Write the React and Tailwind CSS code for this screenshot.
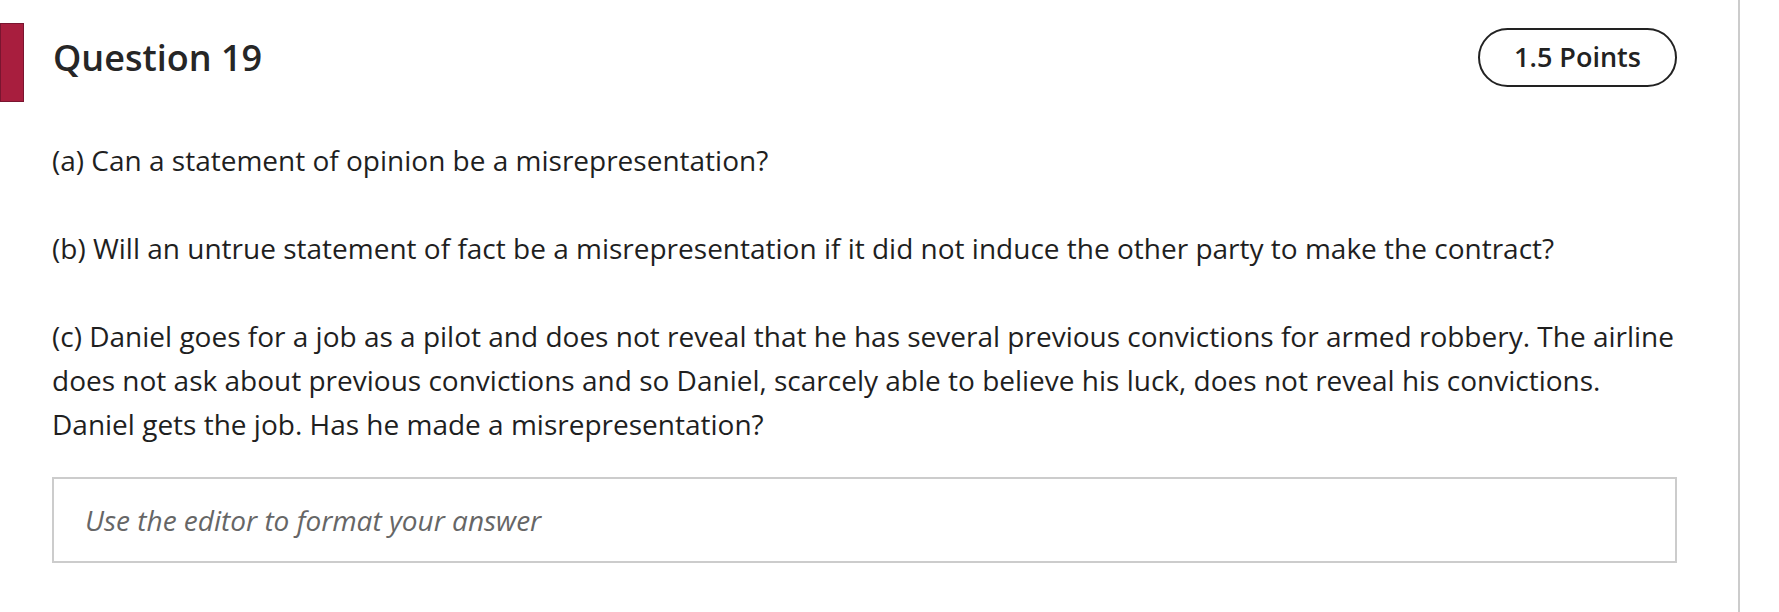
export default function App() {
  return (
    <div className="flex h-[612px] w-[1779px] bg-white text-[#1f1f1f]" style={{ fontFamily: '"Open Sans", "Noto Sans", sans-serif' }}>
      <div className="w-[1740px] border-r-2 border-[#cccccc]">
        <div className="flex items-start">
          <div className="mt-[23px] h-[79px] w-[24px] border border-[#7a1530] bg-[#a81e3e]" />
          <div className="ml-[29px] mr-[61px] mt-[28px] flex flex-1 items-center justify-between">
            <h2 className="text-[36px] font-semibold leading-none text-[#262626]">Question 19</h2>
            <div className="flex h-[59px] w-[199px] items-center justify-center rounded-full border-2 border-[#222222] text-[27px] font-semibold text-[#222222]">
              1.5 Points
            </div>
          </div>
        </div>
        <div className="pl-[52px] pr-[61px] pt-[36px] text-[28px] leading-[44px]">
          <p>(a) Can a statement of opinion be a misrepresentation?</p>
          <p className="mt-[44px]">(b) Will an untrue statement of fact be a misrepresentation if it did not induce the other party to make the contract?</p>
          <p className="mt-[44px]">
            (c) Daniel goes for a job as a pilot and does not reveal that he has several previous convictions for armed robbery. The airline does not ask about previous convictions and so Daniel, scarcely able to believe his luck, does not reveal his convictions. Daniel gets the job. Has he made a misrepresentation?
          </p>
          <div className="mt-[31px] flex h-[86px] items-center border-2 border-[#cccccc] pl-[31px]">
            <span className="text-[28px] italic text-[#666666]">Use the editor to format your answer</span>
          </div>
        </div>
      </div>
    </div>
  );
}
